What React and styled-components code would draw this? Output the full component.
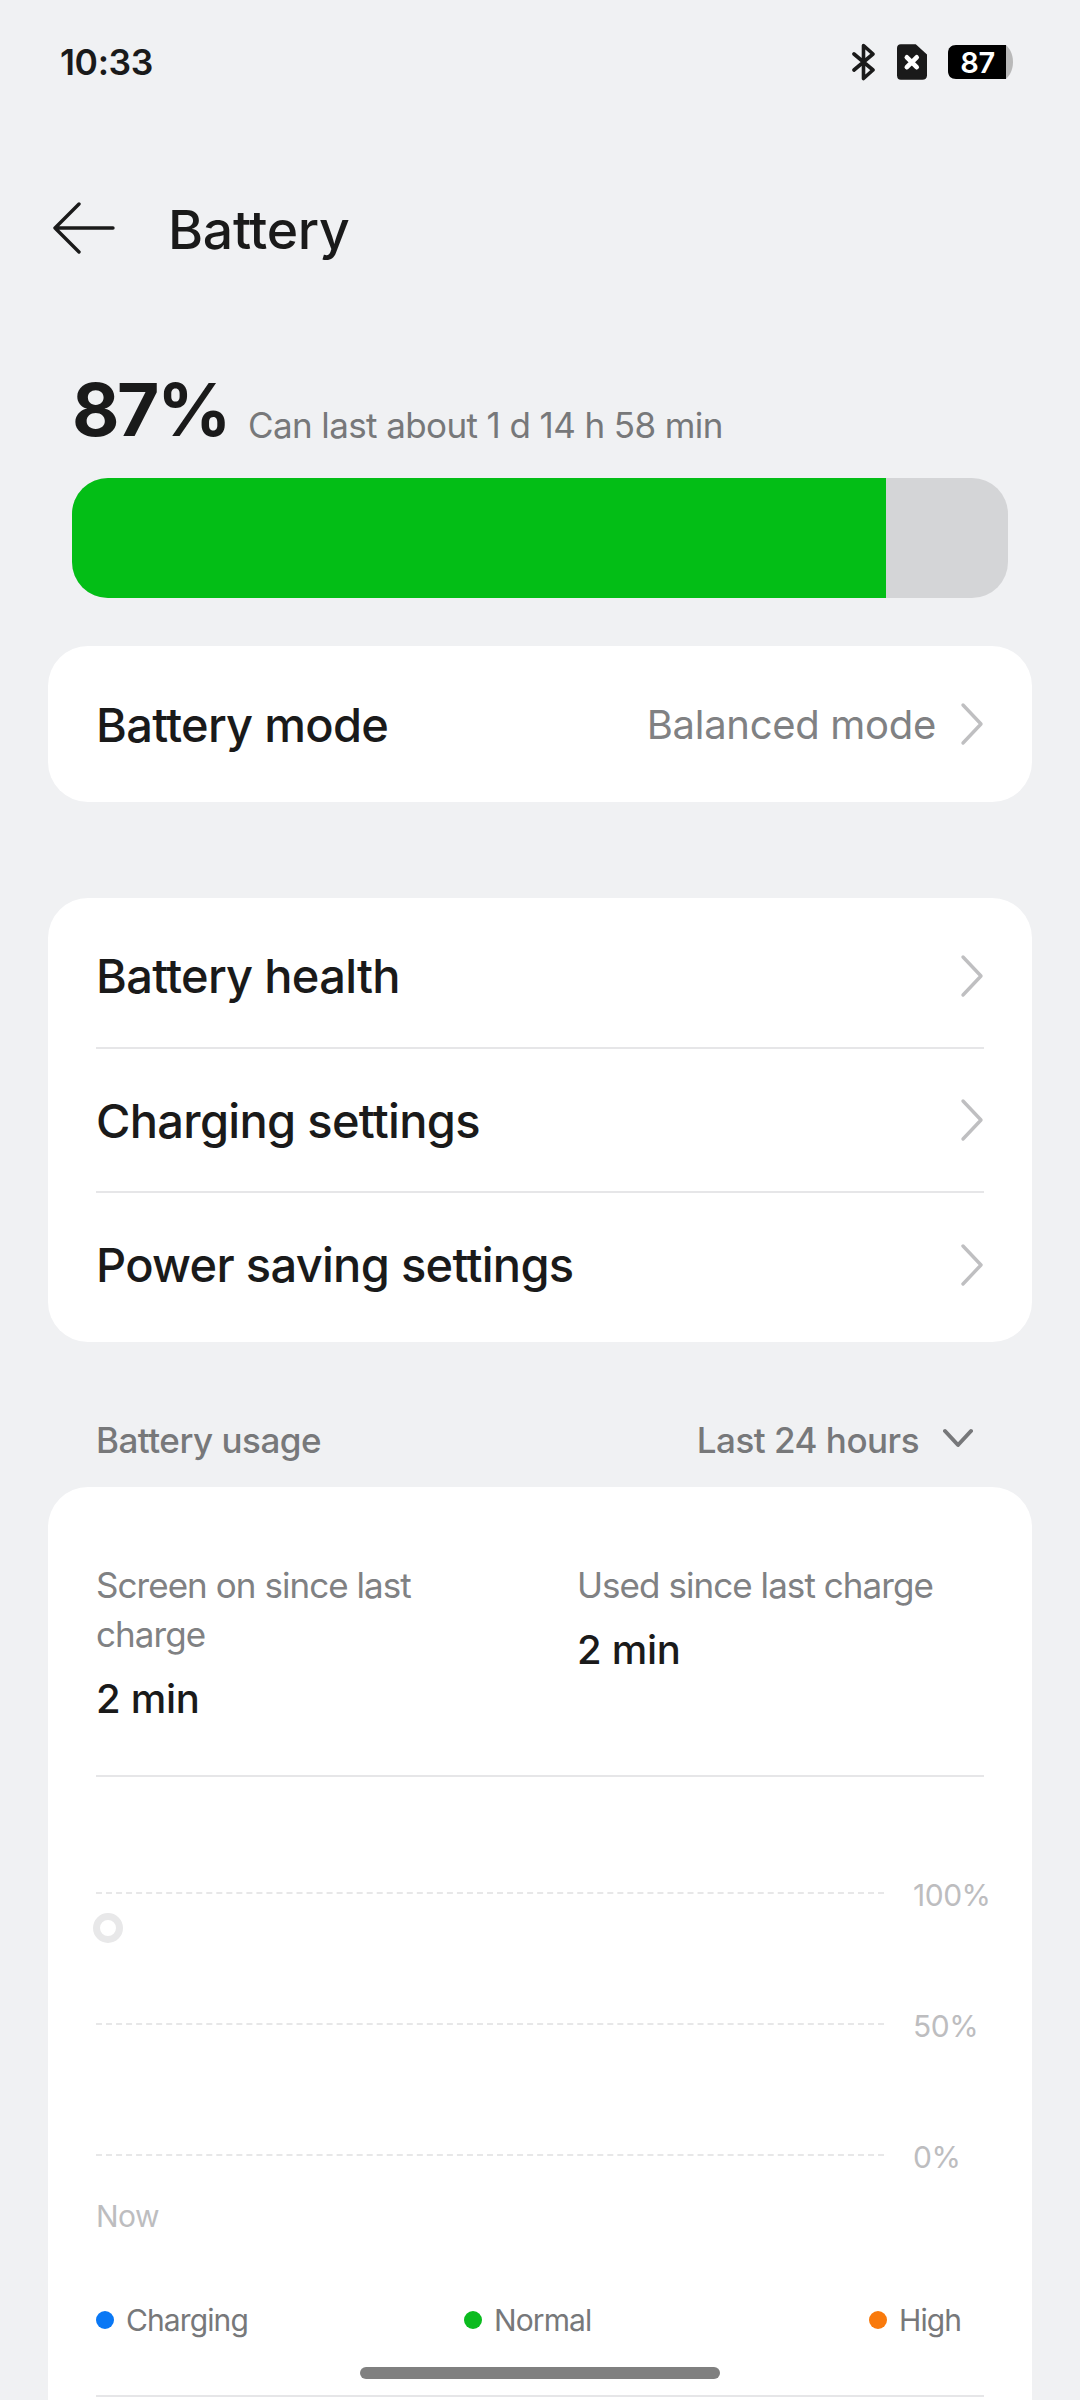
import React from 'react';
import styled, { createGlobalStyle } from 'styled-components';

const GlobalStyle = createGlobalStyle`
  html, body { margin: 0; padding: 0; background: #f0f1f3; }
  body { font-family: Inter, "Noto Sans", sans-serif; color: #1a1a1a; }
  * { box-sizing: border-box; }
`;

const Page = styled.div`
  width: 1080px;
  height: 2400px;
  overflow: hidden;
  position: relative;
  background: #f0f1f3;
`;

const StatusBar = styled.div`
  height: 124px;
  padding: 0 67px 0 60px;
  display: flex;
  align-items: center;
  justify-content: space-between;
`;

const Clock = styled.div`
  font-size: 35.5px;
  font-weight: 600;
  letter-spacing: -0.4px;
`;

const StatusIcons = styled.div`
  display: flex;
  align-items: center;
  gap: 21px;
`;

const BatteryPill = styled.div`
  width: 65px;
  height: 34px;
  padding-right: 6px;
  background: linear-gradient(90deg, #000 0 58px, #b9b9b9 58px);
  clip-path: path('M8 0H58C61 3 65 8 65 17C65 26 61 31 58 34H8C3 34 0 31 0 26V8C0 3 3 0 8 0Z');
  color: #fff;
  font-size: 29px;
  font-weight: 600;
  line-height: 35px;
  letter-spacing: -0.5px;
  text-align: center;
`;

const Header = styled.div`
  margin-top: 50px;
  height: 110px;
  padding-left: 52px;
  display: flex;
  align-items: center;
  gap: 52px;

  svg {
    margin-top: -2px;
  }
`;

const Title = styled.h1`
  margin: 0;
  font-size: 53.5px;
  font-weight: 500;
  letter-spacing: -0.3px;
`;

const Summary = styled.div`
  margin-top: 87px;
  margin-bottom: 29px;
  padding: 0 72px;
  height: 78px;
  display: flex;
  align-items: flex-end;
  gap: 19px;
`;

const Percent = styled.div`
  font-size: 73px;
  font-weight: 700;
  line-height: 78px;
  letter-spacing: -2.4px;
`;

const Estimate = styled.div`
  font-size: 35px;
  line-height: 48px;
  color: #77787a;
  letter-spacing: -0.6px;
`;

const Meter = styled.div`
  margin: 0 72px;
  height: 120px;
  border-radius: 36px;
  background: #d4d5d7;
  overflow: hidden;
`;

const MeterFill = styled.div`
  height: 100%;
  background: #03be16;
`;

const Card = styled.div`
  margin: ${p => p.$top}px 48px 0;
  background: #fff;
  border-radius: 40px;
  padding-bottom: ${p => p.$bottom || 0}px;
`;

const Row = styled.div`
  height: ${p => p.$h}px;
  margin: 0 48px;
  padding-top: ${p => p.$padTop || 0}px;
  padding-bottom: ${p => p.$padBottom || 0}px;
  display: flex;
  align-items: center;
  justify-content: space-between;
  border-bottom: ${p => (p.$line ? '2px solid #e6e6e8' : '0')};
`;

const RowLabel = styled.div`
  font-size: 47px;
  font-weight: 500;
  letter-spacing: -0.7px;
`;

const RowRight = styled.div`
  display: flex;
  align-items: center;
  gap: 24px;
`;

const RowValue = styled.div`
  font-size: 40px;
  color: #808183;
  letter-spacing: -0.3px;
`;

const SectionHead = styled.div`
  margin-top: 75px;
  padding: 0 107px 0 96px;
  height: 46px;
  display: flex;
  align-items: center;
  justify-content: space-between;
  font-size: 35px;
  font-weight: 500;
  color: #77787a;
  letter-spacing: -0.5px;
`;

const RangePick = styled.div`
  display: flex;
  align-items: center;
  gap: 24px;

  svg {
    margin-top: -4px;
  }
`;

const Stats = styled.div`
  margin: 0 48px;
  padding-top: 74px;
  height: 290px;
  display: grid;
  grid-template-columns: 481px 1fr;
  border-bottom: 2px solid #e6e6e8;
`;

const StatLabel = styled.div`
  font-size: 35px;
  line-height: 49px;
  color: #808183;
  letter-spacing: -0.95px;
  max-width: 400px;
`;

const StatValue = styled.div`
  margin-top: 13px;
  font-size: 40px;
  line-height: 54px;
  font-weight: 500;
  letter-spacing: -0.3px;
`;

const Chart = styled.div`
  position: relative;
  margin: 0 48px;
  padding-top: 115px;
`;

const GridRow = styled.div`
  height: 131px;
  display: flex;
  align-items: flex-start;
`;

const GridLine = styled.div`
  flex: 0 0 788px;
  margin-right: 29px;
  border-top: 2px dashed #e7e7e8;
`;

const GridLabel = styled.div`
  margin-top: -12px;
  font-size: 30px;
  line-height: 30px;
  color: #bdbdbf;
  letter-spacing: -0.5px;
`;

const Ring = styled.div`
  position: absolute;
  left: -3px;
  top: 136px;
  width: 30px;
  height: 30px;
  border-radius: 50%;
  border: 7px solid #e8e8e9;
`;

const Now = styled.div`
  margin-top: -87px;
  font-size: 30px;
  line-height: 36px;
  color: #bdbdbf;
  letter-spacing: -0.5px;
`;

const Legend = styled.div`
  margin: 0 48px;
  padding-top: 66px;
  padding-bottom: 55px;
  display: grid;
  grid-template-columns: 368px 405px auto;
  border-bottom: 2px solid #e6e6e8;
`;

const LegendItem = styled.div`
  display: flex;
  align-items: center;
  gap: 12px;
  font-size: 30px;
  line-height: 40px;
  color: #77787a;
  letter-spacing: -0.9px;
`;

const Dot = styled.span`
  width: 18px;
  height: 18px;
  border-radius: 50%;
  background: ${p => p.$color};
`;

const HomeBar = styled.div`
  position: absolute;
  left: 360px;
  top: 2367px;
  width: 360px;
  height: 12px;
  border-radius: 6px;
  background: #808080;
`;

const Chevron = () => (
  <svg width="24" height="44" viewBox="0 0 24 44" fill="none" stroke="#bfbfc1" strokeWidth="3.4" strokeLinecap="round" strokeLinejoin="round">
    <path d="M3 3L21 22L3 41" />
  </svg>
);

const rows = [
  { label: 'Battery health', h: 151, line: true, padTop: 6 },
  { label: 'Charging settings', h: 144, line: true },
  { label: 'Power saving settings', h: 149, padBottom: 6 },
];

const App = () => (
  <Page>
    <GlobalStyle />
    <StatusBar>
      <Clock>10:33</Clock>
      <StatusIcons>
        <svg width="24" height="38" viewBox="0 0 24 38" fill="none" stroke="#1a1a1a" strokeWidth="3.6" strokeLinecap="round" strokeLinejoin="round">
          <path d="M2 11L21 27L11.5 35.5V2.5L21 11L2 27" />
        </svg>
        <svg width="30" height="36" viewBox="0 0 32 38">
          <path fill="#1a1a1a" d="M4 0H20L32 11V33C32 36 30 38 27 38H4C1.5 38 0 36 0 33V4C0 1.5 1.5 0 4 0Z" />
          <path stroke="#fff" strokeWidth="5" strokeLinecap="round" d="M10.5 14L21 24.5M21 14L10.5 24.5" />
        </svg>
        <BatteryPill>87</BatteryPill>
      </StatusIcons>
    </StatusBar>

    <Header>
      <svg width="64" height="52" viewBox="0 0 64 52" fill="none" stroke="#1a1a1a" strokeWidth="3.4" strokeLinecap="round" strokeLinejoin="round">
        <path d="M27 2L3 26L27 50M3 26H61" />
      </svg>
      <Title>Battery</Title>
    </Header>

    <Summary>
      <Percent>87%</Percent>
      <Estimate>Can last about 1 d 14 h 58 min</Estimate>
    </Summary>

    <Meter>
      <MeterFill style={{ width: `${(814 / 936) * 100}%` }} />
    </Meter>

    <Card $top={48}>
      <Row $h={156}>
        <RowLabel>Battery mode</RowLabel>
        <RowRight>
          <RowValue>Balanced mode</RowValue>
          <Chevron />
        </RowRight>
      </Row>
    </Card>

    <Card $top={96}>
      {rows.map(r => (
        <Row key={r.label} $h={r.h} $line={r.line} $padTop={r.padTop} $padBottom={r.padBottom}>
          <RowLabel>{r.label}</RowLabel>
          <Chevron />
        </Row>
      ))}
    </Card>

    <SectionHead>
      <span>Battery usage</span>
      <RangePick>
        <span>Last 24 hours</span>
        <svg width="30" height="20" viewBox="0 0 30 20" fill="none" stroke="#77787a" strokeWidth="4" strokeLinecap="round" strokeLinejoin="round">
          <path d="M2 3L15 17L28 3" />
        </svg>
      </RangePick>
    </SectionHead>

    <Card $top={24} $bottom={120}>
      <Stats>
        <div>
          <StatLabel>Screen on since last charge</StatLabel>
          <StatValue>2 min</StatValue>
        </div>
        <div>
          <StatLabel>Used since last charge</StatLabel>
          <StatValue>2 min</StatValue>
        </div>
      </Stats>

      <Chart>
        <GridRow>
          <GridLine />
          <GridLabel>100%</GridLabel>
        </GridRow>
        <GridRow>
          <GridLine />
          <GridLabel>50%</GridLabel>
        </GridRow>
        <GridRow>
          <GridLine />
          <GridLabel>0%</GridLabel>
        </GridRow>
        <Ring />
        <Now>Now</Now>
      </Chart>

      <Legend>
        <LegendItem><Dot $color="#0a78f5" />Charging</LegendItem>
        <LegendItem><Dot $color="#0bbb1f" />Normal</LegendItem>
        <LegendItem><Dot $color="#f97a0c" />High</LegendItem>
      </Legend>
    </Card>

    <HomeBar />
  </Page>
);

export default App;
